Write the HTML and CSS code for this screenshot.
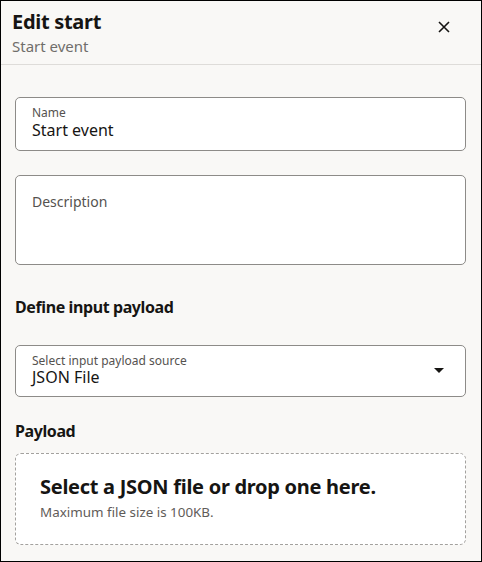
FILE: index.html
```html
<!DOCTYPE html>
<html lang="en">

<head>
    <meta charset="UTF-8">
    <meta name="viewport" content="width=device-width, initial-scale=1.0">
    <title>Edit start</title>
    <link rel="stylesheet" href="styles.css">
</head>

<body>
    <div class="drawer">
        <div class="drawer-header">
            <div>
                <h1 class="drawer-title">Edit start</h1>
                <div class="drawer-subtitle">Start event</div>
            </div>
            <button type="button" class="close-btn" aria-label="Close">
                <svg width="12" height="12" viewBox="0 0 12 12">
                    <path d="M1 1 L11 11 M11 1 L1 11" stroke="#161513" stroke-width="1.6" fill="none" />
                </svg>
            </button>
        </div>

        <div class="drawer-body">
            <div class="field">
                <label class="field-label" for="name">Name</label>
                <div class="field-value" id="name">Start event</div>
            </div>

            <div class="field field-area">
                <label class="area-label" for="description">Description</label>
            </div>

            <h2 class="section-title">Define input payload</h2>

            <div class="field field-select">
                <div>
                    <label class="field-label">Select input payload source</label>
                    <div class="field-value select-value">JSON File</div>
                </div>
                <span class="caret"></span>
            </div>

            <h2 class="section-title payload-title">Payload</h2>

            <div class="dropzone">
                <div class="dropzone-title">Select a JSON file or drop one here.</div>
                <div class="dropzone-hint">Maximum file size is 100KB.</div>
            </div>
        </div>
    </div>
</body>

</html>
```

FILE: styles.css
```css
html, body {
    margin: 0;
    padding: 0;
}

body {
    font-family: "Noto Sans", Arial, sans-serif;
    color: #161513;
}

.drawer {
    box-sizing: border-box;
    height: 562px;
    border: 1px solid #000;
    background: #f9f8f6;
}

.drawer-header {
    display: flex;
    justify-content: space-between;
    align-items: flex-start;
    padding: 8px 15px 8px 11px;
    border-bottom: 1px solid #dedcd9;
}

.drawer-title {
    margin: 0;
    font-size: 20px;
    line-height: 26px;
    font-weight: 700;
    letter-spacing: -0.3px;
}

.drawer-subtitle {
    margin-top: 1px;
    font-size: 15px;
    line-height: 20px;
    color: #706e6b;
}

.close-btn {
    background: none;
    border: none;
    padding: 0;
    margin: 12px 16px 0 0;
    width: 12px;
    height: 12px;
    cursor: pointer;
}

.close-btn svg {
    display: block;
}

.drawer-body {
    padding: 32px 15px 0 14px;
}

.field {
    box-sizing: border-box;
    height: 54px;
    padding: 7px 16px 0;
    background: #fff;
    border: 1px solid #8d8b88;
    border-radius: 5px;
}

.field-label {
    display: block;
    font-size: 12px;
    line-height: 16px;
    color: #55524f;
}

.field-value {
    font-size: 16px;
    line-height: 18px;
}

.field-area {
    height: 90px;
    margin-top: 24px;
    padding-top: 14px;
}

.area-label {
    font-size: 14px;
    line-height: 20px;
    color: #55524f;
}

.section-title {
    margin: 32px 0 0;
    font-size: 16px;
    line-height: 20px;
    font-weight: 700;
    letter-spacing: -0.4px;
}

.field-select {
    display: flex;
    justify-content: space-between;
    align-items: flex-start;
    height: 52px;
    margin-top: 28px;
    padding: 7px 21px 0 16px;
}

.select-value {
    line-height: 16px;
}

/* small filled triangle for the dropdown */
.caret {
    width: 0;
    height: 0;
    margin-top: 15px;
    border-left: 5.5px solid transparent;
    border-right: 5.5px solid transparent;
    border-top: 5px solid #161513;
}

.payload-title {
    margin-top: 24px;
}

.dropzone {
    box-sizing: border-box;
    height: 92px;
    margin-top: 12px;
    padding: 21px 24px 0;
    background: #fff;
    border: 1px dashed #a3a19e;
    border-radius: 6px;
}

.dropzone-title {
    font-size: 20px;
    line-height: 24px;
    font-weight: 700;
    letter-spacing: -0.28px;
}

.dropzone-hint {
    margin-top: 4px;
    font-size: 13.4px;
    line-height: 18px;
    color: #5f5c59;
}
```
